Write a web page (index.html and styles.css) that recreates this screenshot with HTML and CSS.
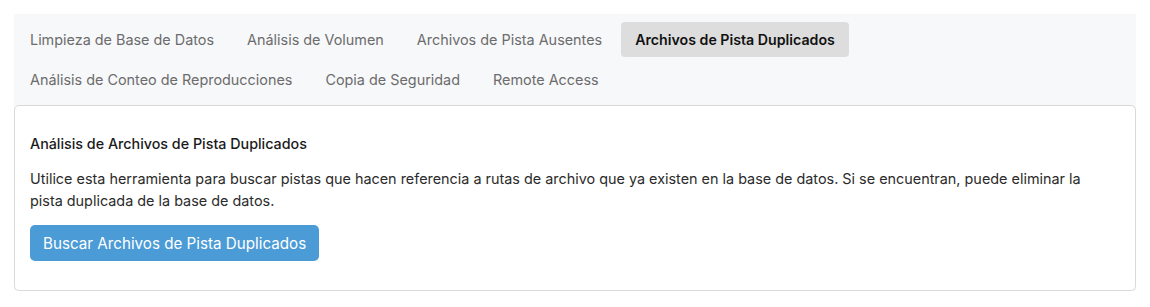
FILE: index.html
```html
<!DOCTYPE html>
<html lang="es">
<head>
  <meta charset="UTF-8">
  <title>Mantenimiento de Base de Datos</title>
  <link rel="stylesheet" href="styles.css">
</head>
<body>
  <div class="tools">
    <!-- pestañas -->
    <div class="tab-bar">
      <a class="tab">Limpieza de Base de Datos</a>
      <a class="tab">Análisis de Volumen</a>
      <a class="tab">Archivos de Pista Ausentes</a>
      <a class="tab active">Archivos de Pista Duplicados</a>
      <a class="tab">Análisis de Conteo de Reproducciones</a>
      <a class="tab">Copia de Seguridad</a>
      <a class="tab">Remote Access</a>
    </div>

    <div class="panel">
      <div class="panel-title">Análisis de Archivos de Pista Duplicados</div>
      <p class="panel-text">
        Utilice esta herramienta para buscar pistas que hacen referencia a rutas de archivo que ya existen en la base de datos. Si se encuentran, puede eliminar la pista duplicada de la base de datos.
      </p>
      <button class="btn-primary">Buscar Archivos de Pista Duplicados</button>
    </div>
  </div>
</body>
</html>
```

FILE: styles.css
```css
body {
  margin: 14px;
  font-family: Inter, "Noto Sans", sans-serif;
  font-size: 14.4px;
  color: #212529;
  background: #fff;
}

.tools {
  background: #f7f8fa;
}

.tab-bar {
  display: flex;
  flex-wrap: wrap;
  gap: 5px 5px;
  padding: 8px 2px 8px 2px;
}

.tab {
  padding: 7px 14px;
  line-height: 21px;
  color: #6c6c6c;
  border-radius: 4px;
  cursor: pointer;
}

.tab.active {
  background: #dddddd;
  color: #111;
  font-weight: 600;
  font-size: 14.2px;
}

.panel {
  background: #fff;
  border: 1px solid #d9d9d9;
  border-radius: 5px;
  padding: 29px 15px 29px 15px;
}

.panel-title {
  font-weight: 500;
  font-size: 14.3px;
  color: #1a1a1a;
  margin-bottom: 16px;
}

.panel-text {
  margin: 0 0 13px 0;
  padding-right: 24px;
  font-size: 14.4px;
  line-height: 22px;
  color: #2b2b2b;
}

.btn-primary {
  display: block;
  font-family: inherit;
  font-size: 15.2px;
  color: #fff;
  background: #4a9bd6;
  border: none;
  border-radius: 5px;
  height: 36px;
  padding: 0 13px;
  cursor: pointer;
}
```
